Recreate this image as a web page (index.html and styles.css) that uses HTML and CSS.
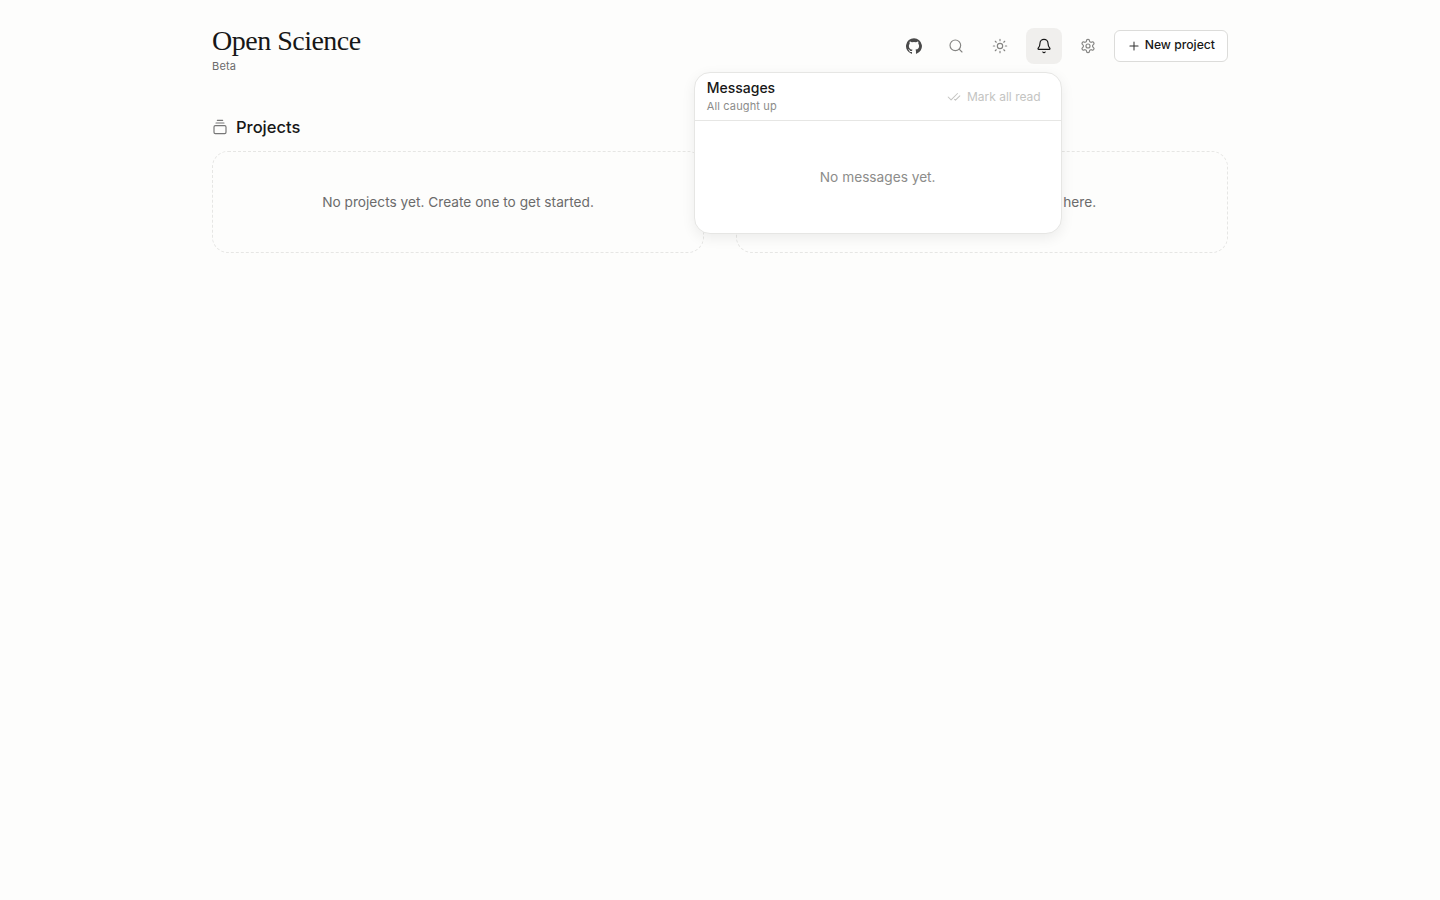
FILE: index.html
```html
<!DOCTYPE html>
<html lang="en">
<head>
  <meta charset="UTF-8">
  <meta name="viewport" content="width=device-width, initial-scale=1.0">
  <title>Open Science</title>
  <link rel="stylesheet" href="styles.css">
</head>
<body>

<div class="page">
  <header class="topbar">
    <div class="brand">
      <h1>Open Science</h1>
      <p>Beta</p>
    </div>
    <div class="actions">
      <button class="icon-btn github" aria-label="GitHub">
        <svg class="icon" viewBox="0 0 24 24" fill="currentColor"><path d="M12 .3a12 12 0 0 0-3.8 23.38c.6.12.83-.26.83-.57l-.02-2.24c-3.34.73-4.04-1.41-4.04-1.41-.55-1.39-1.33-1.76-1.33-1.76-1.09-.74.08-.73.08-.73 1.2.09 1.84 1.24 1.84 1.24 1.07 1.83 2.8 1.3 3.49 1 .1-.78.42-1.31.76-1.61-2.67-.3-5.47-1.33-5.47-5.93 0-1.31.47-2.38 1.24-3.22-.14-.3-.54-1.52.1-3.18 0 0 1-.32 3.3 1.23a11.5 11.5 0 0 1 6 0c2.28-1.55 3.29-1.23 3.29-1.23.64 1.66.24 2.88.12 3.18a4.65 4.65 0 0 1 1.23 3.22c0 4.61-2.8 5.63-5.48 5.92.42.36.81 1.1.81 2.22l-.01 3.29c0 .31.2.69.82.57A12 12 0 0 0 12 .3"/></svg>
      </button>
      <button class="icon-btn" aria-label="Search">
        <svg class="icon" viewBox="0 0 24 24"><circle cx="11" cy="11" r="8"/><path d="m21 21-4.3-4.3"/></svg>
      </button>
      <button class="icon-btn" aria-label="Theme">
        <svg class="icon" viewBox="0 0 24 24"><circle cx="12" cy="12" r="4"/><path d="M12 2v2M12 20v2M4.93 4.93l1.41 1.41M17.66 17.66l1.41 1.41M2 12h2M20 12h2M6.34 17.66l-1.41 1.41M19.07 4.93l-1.41 1.41"/></svg>
      </button>
      <div class="bell-wrap">
        <button class="icon-btn active" aria-label="Messages">
          <svg class="icon" viewBox="0 0 24 24"><path d="M10.27 21a2 2 0 0 0 3.46 0"/><path d="M3.26 15.33A1 1 0 0 0 4 17h16a1 1 0 0 0 .74-1.67C19.41 13.96 18 12.5 18 8A6 6 0 0 0 6 8c0 4.5-1.41 5.96-2.74 7.33"/></svg>
        </button>
        <div class="popover">
          <div class="popover-head">
            <div>
              <div class="popover-title">Messages</div>
              <div class="popover-sub">All caught up</div>
            </div>
            <button class="mark-read">
              <svg class="icon-sm" viewBox="0 0 24 24"><path d="M18 6 7 17l-5-5"/><path d="m22 10-7.5 7.5L13 16"/></svg>
              Mark all read
            </button>
          </div>
          <div class="popover-empty">No messages yet.</div>
        </div>
      </div>
      <button class="icon-btn" aria-label="Settings">
        <svg class="icon" viewBox="0 0 24 24"><path d="M12.22 2h-.44a2 2 0 0 0-2 2v.18a2 2 0 0 1-1 1.73l-.43.25a2 2 0 0 1-2 0l-.15-.08a2 2 0 0 0-2.73.73l-.22.38a2 2 0 0 0 .73 2.73l.15.1a2 2 0 0 1 1 1.72v.51a2 2 0 0 1-1 1.74l-.15.09a2 2 0 0 0-.73 2.73l.22.38a2 2 0 0 0 2.73.73l.15-.08a2 2 0 0 1 2 0l.43.25a2 2 0 0 1 1 1.73V20a2 2 0 0 0 2 2h.44a2 2 0 0 0 2-2v-.18a2 2 0 0 1 1-1.73l.43-.25a2 2 0 0 1 2 0l.15.08a2 2 0 0 0 2.73-.73l.22-.39a2 2 0 0 0-.73-2.73l-.15-.08a2 2 0 0 1-1-1.74v-.5a2 2 0 0 1 1-1.74l.15-.09a2 2 0 0 0 .73-2.73l-.22-.38a2 2 0 0 0-2.73-.73l-.15.08a2 2 0 0 1-2 0l-.43-.25a2 2 0 0 1-1-1.73V4a2 2 0 0 0-2-2z"/><circle cx="12" cy="12" r="3"/></svg>
      </button>
      <button class="new-project">
        <svg class="icon-plus" viewBox="0 0 24 24"><path d="M5 12h14M12 5v14"/></svg>
        <span class="new-project-label">New project</span>
      </button>
    </div>
  </header>

  <main class="columns">
    <section>
      <h2 class="section-title">
        <svg class="icon-section" viewBox="0 0 24 24"><rect x="3" y="10" width="18" height="12" rx="2"/><path d="M6 6h12M8 2h8"/></svg>
        Projects
      </h2>
      <div class="empty-box">No projects yet. Create one to get started.</div>
    </section>
    <section>
      <h2 class="section-title">Shared with me</h2>
      <div class="empty-box">Shared projects will appear in here.</div>
    </section>
  </main>
</div>

</body>
</html>
```

FILE: styles.css
```css
:root {
  --bg: #fdfdfc;
  --text: #171717;
  --muted: #6b6b6b;
  --border: #e6e6e4;
}

* {
  box-sizing: border-box;
  margin: 0;
  padding: 0;
}

body {
  font-family: Inter, "Noto Sans", sans-serif;
  background-color: var(--bg);
  color: var(--text);
  min-height: 100vh;
}

button {
  font-family: inherit;
  background: none;
  border: none;
}

.page {
  width: 1016px;
  margin: 0 auto;
}

.topbar {
  display: flex;
  justify-content: space-between;
  align-items: flex-start;
  padding-top: 24px;
  height: 104px;
}

.brand h1 {
  font-family: "Liberation Serif", serif;
  font-size: 28px;
  line-height: 34px;
  font-weight: 400;
  letter-spacing: -0.5px;
}

.brand p {
  font-size: 11px;
  line-height: 14px;
  letter-spacing: 0.2px;
  color: var(--muted);
  margin-top: 1px;
}

.actions {
  display: flex;
  align-items: center;
  gap: 8px;
  padding-top: 4px;
}

.icon-btn {
  width: 36px;
  height: 36px;
  border-radius: 8px;
  display: flex;
  align-items: center;
  justify-content: center;
  color: #858583;
}

.icon-btn.github {
  color: #4a4a4a;
  margin-right: -2px;
}

.icon-btn.active {
  background-color: #f0efed;
  color: var(--text);
}

.icon {
  width: 16px;
  height: 16px;
  fill: none;
  stroke: currentColor;
  stroke-width: 1.75;
  stroke-linecap: round;
  stroke-linejoin: round;
}

.github .icon {
  fill: currentColor;
  stroke: none;
}

.bell-wrap {
  position: relative;
}

.popover {
  position: absolute;
  top: 44px;
  right: 0;
  width: 368px;
  height: 162px;
  background-color: #fff;
  border: 1px solid var(--border);
  border-radius: 16px;
  box-shadow: 0 4px 14px rgba(0,0,0,0.07);
  z-index: 10;
}

.popover-head {
  display: flex;
  justify-content: space-between;
  align-items: center;
  height: 48px;
  padding: 0 12px 2px;
  border-bottom: 1px solid var(--border);
}

.popover-title {
  font-size: 14px;
  line-height: 18px;
  font-weight: 500;
}

.popover-sub {
  font-size: 11px;
  line-height: 14px;
  letter-spacing: 0.15px;
  color: #8c8c8a;
  margin-top: 2px;
}

.mark-read {
  display: flex;
  align-items: center;
  gap: 6px;
  font-size: 12px;
  color: #c4c4c2;
  padding: 2px 8px 0 0;
}

.icon-sm {
  width: 14px;
  height: 14px;
  fill: none;
  stroke: currentColor;
  stroke-width: 1.75;
  stroke-linecap: round;
  stroke-linejoin: round;
}

.popover-empty {
  text-align: center;
  font-size: 13.7px;
  line-height: 20px;
  color: #8c8c8a;
  padding-top: 46px;
}

.new-project {
  display: flex;
  align-items: center;
  gap: 4px;
  height: 32px;
  padding: 0 12px;
  font-size: 12.2px;
  font-weight: 500;
  color: var(--text);
  background-color: #fff;
  border: 1px solid #dcdcda;
  border-radius: 6px;
}

.new-project-label {
  line-height: 16px;
  margin-bottom: 2px;
}

.icon-plus {
  width: 14px;
  height: 14px;
  fill: none;
  stroke: #333;
  stroke-width: 1.75;
  stroke-linecap: round;
}

.columns {
  display: grid;
  grid-template-columns: 1fr 1fr;
  gap: 32px;
}

.section-title {
  display: flex;
  align-items: center;
  gap: 8px;
  height: 47px;
  padding-bottom: 2px;
  font-size: 16.5px;
  font-weight: 500;
}

.icon-section {
  width: 16px;
  height: 16px;
  fill: none;
  stroke: #777;
  stroke-width: 1.75;
  stroke-linecap: round;
  stroke-linejoin: round;
}

.empty-box {
  height: 102px;
  display: flex;
  align-items: center;
  justify-content: center;
  font-size: 13.7px;
  color: var(--muted);
  border: 1px dashed var(--border);
  border-radius: 16px;
}
```
